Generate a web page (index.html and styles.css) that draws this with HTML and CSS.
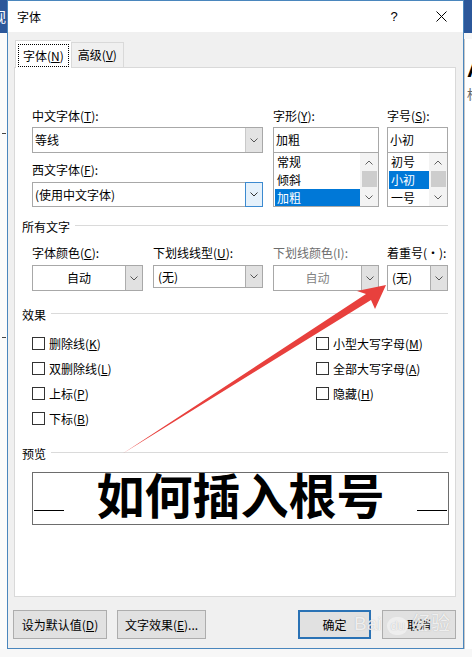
FILE: index.html
```html
<!DOCTYPE html>
<html lang="zh-CN">
<head>
    <meta charset="UTF-8">
    <title>字体</title>
    <link rel="stylesheet" href="styles.css">
</head>
<body>
<div class="screen">
    <!-- Word window behind the dialog -->
    <div class="side side-left">
        <div class="side-top"><span>视</span></div>
        <div class="side-rest">
            <span class="tick tick-a"></span>
            <span class="tick tick-b"></span>
        </div>
    </div>

    <div class="dialog">
        <div class="titlebar">
            <span class="title">字体</span>
            <span class="help">?</span>
            <span class="close">
                <svg width="11" height="11" viewBox="0 0 11 11"><path d="M0.5 0.5 L10.5 10.5 M10.5 0.5 L0.5 10.5" stroke="#000" stroke-width="1"/></svg>
            </span>
        </div>

        <div class="dialog-body">
            <div class="tabs">
                <div class="tab active"><span class="focus">字体(<u>N</u>)</span></div>
                <div class="tab">高级(<u>V</u>)</div>
            </div>

            <div class="panel">
                <div class="fonts group">
                    <div class="col col-face">
                        <div class="lbl">中文字体(<u>T</u>):</div>
                        <div class="combo">
                            <span class="val">等线</span>
                            <span class="drop"><svg width="8" height="5" viewBox="0 0 8 5"><polyline points="0.5,0.5 4,4 7.5,0.5" fill="none" stroke="#555"/></svg></span>
                        </div>
                        <div class="lbl lbl-second">西文字体(<u>F</u>):</div>
                        <div class="combo combo-short">
                            <span class="val">(使用中文字体)</span>
                            <span class="drop drop-hover"><svg width="8" height="5" viewBox="0 0 8 5"><polyline points="0.5,0.5 4,4 7.5,0.5" fill="none" stroke="#333"/></svg></span>
                        </div>
                    </div>

                    <div class="col col-style">
                        <div class="lbl">字形(<u>Y</u>):</div>
                        <div class="field">加粗</div>
                        <div class="list">
                            <div class="items">
                                <div>常规</div>
                                <div>倾斜</div>
                                <div class="sel">加粗</div>
                            </div>
                            <div class="scroll">
                                <span class="arr"><svg width="8" height="5" viewBox="0 0 8 5"><polyline points="0.5,4.5 4,1 7.5,4.5" fill="none" stroke="#606060"/></svg></span>
                                <span class="thumb"></span>
                                <span class="arr arr-down"><svg width="8" height="5" viewBox="0 0 8 5"><polyline points="0.5,0.5 4,4 7.5,0.5" fill="none" stroke="#606060"/></svg></span>
                            </div>
                        </div>
                    </div>

                    <div class="col col-size">
                        <div class="lbl">字号(<u>S</u>):</div>
                        <div class="field">小初</div>
                        <div class="list">
                            <div class="items">
                                <div>初号</div>
                                <div class="sel">小初</div>
                                <div>一号</div>
                            </div>
                            <div class="scroll">
                                <span class="arr"><svg width="8" height="5" viewBox="0 0 8 5"><polyline points="0.5,4.5 4,1 7.5,4.5" fill="none" stroke="#606060"/></svg></span>
                                <span class="thumb"></span>
                                <span class="arr arr-down"><svg width="8" height="5" viewBox="0 0 8 5"><polyline points="0.5,0.5 4,4 7.5,0.5" fill="none" stroke="#606060"/></svg></span>
                            </div>
                        </div>
                    </div>
                </div>

                <div class="section section-all"><span>所有文字</span></div>
                <div class="colors group">
                    <div class="col col-color">
                        <div class="lbl">字体颜色(<u>C</u>):</div>
                        <div class="select">
                            <span class="val val-center">自动</span>
                            <span class="drop"><svg width="8" height="5" viewBox="0 0 8 5"><polyline points="0.5,0.5 4,4 7.5,0.5" fill="none" stroke="#555"/></svg></span>
                        </div>
                    </div>
                    <div class="col col-uline">
                        <div class="lbl">下划线线型(<u>U</u>):</div>
                        <div class="select select-short">
                            <span class="val">(无)</span>
                            <span class="drop"><svg width="8" height="5" viewBox="0 0 8 5"><polyline points="0.5,0.5 4,4 7.5,0.5" fill="none" stroke="#555"/></svg></span>
                        </div>
                    </div>
                    <div class="col col-ucolor">
                        <div class="lbl lbl-off">下划线颜色(I):</div>
                        <div class="select">
                            <span class="val val-center val-off">自动</span>
                            <span class="drop"><svg width="8" height="5" viewBox="0 0 8 5"><polyline points="0.5,0.5 4,4 7.5,0.5" fill="none" stroke="#555"/></svg></span>
                        </div>
                    </div>
                    <div class="col col-emph">
                        <div class="lbl">着重号(·):</div>
                        <div class="select">
                            <span class="val">(无)</span>
                            <span class="drop"><svg width="8" height="5" viewBox="0 0 8 5"><polyline points="0.5,0.5 4,4 7.5,0.5" fill="none" stroke="#555"/></svg></span>
                        </div>
                    </div>
                </div>

                <div class="section section-fx"><span>效果</span></div>
                <div class="effects group">
                    <div class="fx-col fx-left">
                        <div class="cb"><span class="box"></span>删除线(<u>K</u>)</div>
                        <div class="cb"><span class="box"></span>双删除线(<u>L</u>)</div>
                        <div class="cb"><span class="box"></span>上标(<u>P</u>)</div>
                        <div class="cb"><span class="box"></span>下标(<u>B</u>)</div>
                    </div>
                    <div class="fx-col">
                        <div class="cb"><span class="box"></span>小型大写字母(<u>M</u>)</div>
                        <div class="cb"><span class="box"></span>全部大写字母(<u>A</u>)</div>
                        <div class="cb"><span class="box"></span>隐藏(<u>H</u>)</div>
                    </div>
                </div>

                <div class="section section-preview"><span>预览</span></div>
                <div class="group">
                    <div class="preview">
                        <span class="base-line"></span>
                        <span class="sample">如何插入根号</span>
                        <span class="base-line"></span>
                    </div>
                </div>
            </div>

            <div class="buttons">
                <div class="btn btn-default">设为默认值(<u>D</u>)</div>
                <div class="btn btn-effects">文字效果(<u>E</u>)...</div>
                <div class="spacer"></div>
                <div class="btn btn-ok">确定</div>
                <div class="btn btn-cancel">取消</div>
            </div>
        </div>
    </div>

    <div class="side side-right">
        <div class="side-top"></div>
        <div class="side-rest">
            <span class="rib-a">A</span>
            <span class="rib-b">标</span>
        </div>
    </div>

    <div class="watermark">Bai<span class="paw">du</span>经验</div>

    <!-- red annotation arrow drawn over the dialog -->
    <svg class="arrow" width="472" height="657" viewBox="0 0 472 657">
        <polygon points="122,454 366,294 357,291 386,285 375,309 371,300" fill="#e8403d"/>
    </svg>
</div>
</body>
</html>
```

FILE: styles.css
```css
/* Word "字体" dialog */
* {
    box-sizing: border-box;
}
body {
    margin: 0;
    font-family: "Noto Sans CJK SC", "Noto Sans", sans-serif;
    font-size: 12px;
    color: #000;
    background: #f7f7f7;
}
u {
    text-decoration-thickness: 1px;
    text-underline-offset: 1px;
}
.screen {
    position: relative;
    width: 472px;
    height: 657px;
    overflow: hidden;
    display: flex;
    background: #f7f7f7;
}

/* window behind */
.side {
    flex: none;
    width: 7px;
    height: 649px;
    display: flex;
    flex-direction: column;
    overflow: hidden;
}
.side-right {
    width: 8px;
}
.side-top {
    height: 33px;
    background: #2b579a;
    color: #fff;
    font-size: 14px;
    line-height: 33px;
    white-space: nowrap;
    flex: none;
}
.side-left .side-top span {
    display: block;
    margin-left: -8px;
}
.side-rest {
    flex: 1;
    background: #fbfbfb;
    display: flex;
    flex-direction: column;
}
.tick {
    display: block;
    width: 4px;
    border-top: 1px solid #444;
    margin-left: 2px;
}
.tick-a {
    margin-top: 100px;
}
.tick-b {
    margin-top: 203px;
}
.side-right .side-rest {
    background: #fff;
    border-left: 1px solid #c8c8c8;
    margin-top: 6px;
    padding-left: 2px;
}
.rib-a {
    font-family: "Liberation Sans", sans-serif;
    font-weight: bold;
    font-size: 22px;
    line-height: 22px;
    margin-top: 20px;
}
.rib-b {
    color: #666;
    font-size: 13px;
    line-height: 14px;
    margin-top: 6px;
}

/* dialog frame */
.dialog {
    flex: none;
    width: 457px;
    height: 649px;
    border: 1px solid #4a86bd;
    background: #f0f0f0;
    display: flex;
    flex-direction: column;
}
.titlebar {
    height: 31px;
    background: #fff;
    display: flex;
    align-items: center;
    flex: none;
}
.title {
    flex: 1;
    padding-left: 9px;
    line-height: 16px;
}
.help {
    width: 30px;
    text-align: center;
    margin-right: 10px;
    font-family: "Liberation Sans", sans-serif;
    font-size: 13px;
}
.close {
    width: 44px;
    display: flex;
    justify-content: center;
    align-items: center;
}
.dialog-body {
    flex: 1;
    display: flex;
    flex-direction: column;
    padding: 8px 7px 0 6px;
}

/* tabs */
.tabs {
    display: flex;
    align-items: flex-end;
    height: 27px;
    flex: none;
}
.tab {
    height: 25px;
    border: 1px solid #d9d9d9;
    border-bottom: none;
    padding: 0 6px;
    line-height: 24px;
    background: #f0f0f0;
}
.tab.active {
    height: 28px;
    margin-bottom: -1px;
    margin-left: 1px;
    padding: 3px 2px 1px 2px;
    background: #fff;
    border-right: none;
    position: relative;
    z-index: 1;
}
.focus {
    display: block;
    border: 1px dotted #000;
    padding: 0 4px;
    line-height: 21px;
}

/* panel */
.panel {
    flex: none;
    height: 530px;
    background: #fff;
    border: 1px solid #d9d9d9;
    padding: 0 7px 0 7px;
    display: flex;
    flex-direction: column;
}
.group {
    padding-left: 10px;
}
.lbl {
    height: 16px;
    line-height: 16px;
    white-space: nowrap;
}
.lbl-off {
    color: #6d6d6d;
}
.fonts {
    display: flex;
    margin-top: 40px;
}
.col {
    display: flex;
    flex-direction: column;
}
.col-face {
    width: 231px;
    margin-right: 10px;
}
.col-style {
    width: 106px;
    margin-right: 8px;
}
.col-size {
    width: 61px;
}
.combo,
.select,
.field {
    margin-top: 3px;
    height: 26px;
    border: 1px solid #a8a8a8;
    background: #fff;
    display: flex;
}
.combo-short {
    margin-top: 4px;
    height: 25px;
}
.lbl-second {
    margin-top: 9px;
}
.field {
    padding-left: 2px;
    line-height: 24px;
}
.val {
    flex: 1;
    padding-left: 2px;
    line-height: 24px;
    white-space: nowrap;
    overflow: hidden;
}
.val-center {
    text-align: center;
}
.val-off {
    color: #838383;
}
.drop {
    width: 17px;
    flex: none;
    background: #e3e3e3;
    border-left: 1px solid #c9c9c9;
    display: flex;
    align-items: center;
    justify-content: center;
}
.drop-hover {
    background: #e5f1fb;
    border: 1px solid #3c8ad0;
    margin: -1px -1px -1px 0;
    width: 18px;
}

/* list boxes */
.list {
    margin-top: -1px;
    height: 55px;
    border: 1px solid #a8a8a8;
    background: #fff;
    display: flex;
}
.items {
    flex: 1;
    padding: 0 0 0 1px;
    overflow: hidden;
}
.items div {
    height: 18px;
    line-height: 18px;
    padding-left: 2px;
}
.items .sel {
    background: #0078d7;
    color: #fff;
}
.scroll {
    width: 18px;
    flex: none;
    background: #f3f3f3;
    display: flex;
    flex-direction: column;
    align-items: center;
}
.arr {
    height: 18px;
    display: flex;
    align-items: center;
    justify-content: center;
}
.arr-down {
    margin-top: auto;
    height: 17px;
}
.thumb {
    width: 15px;
    height: 16px;
    background: #cdcdcd;
}

/* section headers */
.section {
    display: flex;
    align-items: center;
    height: 16px;
    line-height: 16px;
}
.section::after {
    content: "";
    flex: 1;
    border-top: 1px solid #dadada;
    margin-left: 5px;
    margin-top: -3px;
}
.section-all {
    margin-top: 12px;
}
.section-fx {
    margin-top: 16px;
}
.section-preview {
    margin-top: 15px;
}

/* colour / underline row */
.colors {
    display: flex;
    margin-top: 10px;
}
.colors .select {
    margin-top: 4px;
}
.col-color {
    width: 111px;
    margin-right: 10px;
}
.col-uline {
    width: 110px;
    margin-right: 10px;
}
.col-ucolor {
    width: 106px;
    margin-right: 8px;
}
.col-emph {
    width: 61px;
}
.colors .select .val {
    padding-left: 4px;
}
.colors .select .val-center {
    padding-left: 0;
}
.select .drop {
    border-left-color: #adadad;
    background: #e1e1e1;
}
.select-short {
    height: 23px;
}
.select-short .val {
    line-height: 21px;
}

/* checkboxes */
.effects {
    display: flex;
    margin-top: 8px;
}
.fx-col {
    display: flex;
    flex-direction: column;
}
.fx-left {
    width: 284px;
}
.cb {
    height: 25px;
    display: flex;
    align-items: center;
    white-space: nowrap;
}
.box {
    width: 13px;
    height: 13px;
    border: 1px solid #333;
    background: #fff;
    margin-right: 4px;
    flex: none;
}

/* preview */
.preview {
    margin-top: 10px;
    width: 417px;
    height: 53px;
    border: 1px solid #6d6d6d;
    display: flex;
    justify-content: space-between;
    align-items: flex-start;
}
.base-line {
    width: 30px;
    border-top: 1px solid #000;
    margin: 37px 1px 0 1px;
}
.sample {
    font-size: 48px;
    font-weight: bold;
    line-height: 40px;
    white-space: nowrap;
}

/* buttons */
.buttons {
    display: flex;
    margin-top: 13px;
    flex: none;
}
.btn {
    height: 29px;
    border: 1px solid #adadad;
    background: #e1e1e1;
    line-height: 27px;
    text-align: center;
    white-space: nowrap;
}
.btn-default {
    width: 94px;
    margin-left: -1px;
}
.btn-effects {
    width: 89px;
    margin-left: 10px;
}
.spacer {
    flex: 1;
}
.btn-ok {
    width: 73px;
    border: 2px solid #2a72b5;
    line-height: 25px;
}
.btn-cancel {
    width: 74px;
    margin-left: 11px;
}

/* overlays */
.watermark {
    position: absolute;
    left: 354px;
    top: 611px;
    font-family: "Liberation Sans", sans-serif;
    font-size: 19px;
    line-height: 26px;
    color: rgba(255, 255, 255, 0.8);
    text-shadow: 0 0 1px rgba(120, 120, 120, 0.5);
    white-space: nowrap;
}
.paw {
    display: inline-block;
    margin: 0 4px 0 6px;
    padding: 0 3px;
    border-radius: 10px;
    font-size: 13px;
    line-height: 18px;
    background: rgba(255, 255, 255, 0.45);
}
.arrow {
    position: absolute;
    left: 0;
    top: 0;
    pointer-events: none;
}
```
